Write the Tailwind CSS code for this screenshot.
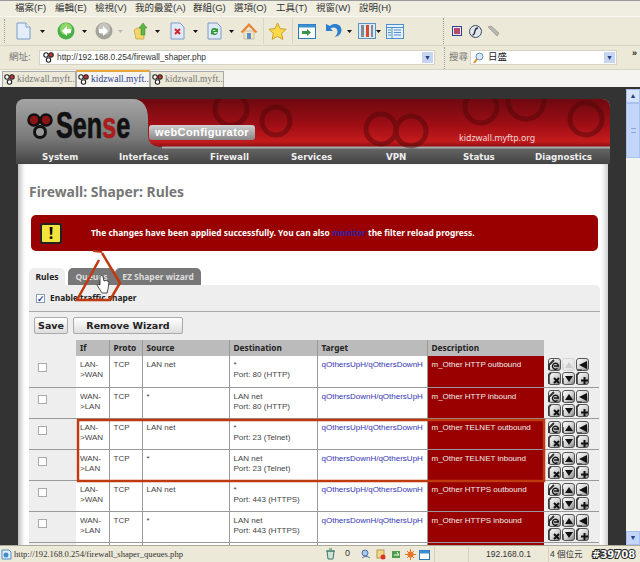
<!DOCTYPE html>
<html>
<head>
    <title>Firewall: Shaper: Rules</title>
    <script src="https://cdn.jsdelivr.net/npm/@tailwindcss/browser@4"></script>
</head>
<body class="w-[640px] h-[562px] overflow-hidden relative flex flex-col bg-[#ece9d8] font-['Liberation_Sans','Noto_Sans_CJK_TC',sans-serif]">

    <svg class="absolute" width="0" height="0">
        <defs>
            <linearGradient id="btnFill" x1="0" y1="0" x2="1" y2="1"><stop offset="0" stop-color="#fff"/><stop offset=".55" stop-color="#d4d4d4"/><stop offset="1" stop-color="#777"/></linearGradient>
            <linearGradient id="redFill" x1="0" y1="0" x2="0" y2="1"><stop offset="0" stop-color="#6e0a10"/><stop offset=".55" stop-color="#a00f16"/><stop offset=".88" stop-color="#c41c1e"/><stop offset="1" stop-color="#8e0f12"/></linearGradient>
        </defs>
    </svg>

    <!-- menu bar -->
    <div class="h-[16px] shrink-0 flex items-center pl-[15px] gap-[9px] text-[9.5px] text-[#333] bg-[#f0eee0] border-t border-[#999]">
        <span class="w-[31px] whitespace-nowrap">檔案(F)</span>
        <span class="w-[31px] whitespace-nowrap">編輯(E)</span>
        <span class="w-[31px] whitespace-nowrap">檢視(V)</span>
        <span class="w-[49px] whitespace-nowrap">我的最愛(A)</span>
        <span class="w-[32px] whitespace-nowrap">群組(G)</span>
        <span class="w-[33px] whitespace-nowrap">選項(O)</span>
        <span class="w-[31px] whitespace-nowrap">工具(T)</span>
        <span class="w-[34px] whitespace-nowrap">視窗(W)</span>
        <span class="w-[31px] whitespace-nowrap">說明(H)</span>
    </div>

    <!-- toolbar -->
    <div class="h-[30px] shrink-0 flex items-center bg-[#ece9d8] border-t border-[#f8f7f0] border-b border-b-[#d8d5c2] relative">
        <div class="ml-[4px] w-px h-[24px] border-l border-dotted border-[#999]"></div>
        <svg class="ml-[11px]" width="15" height="18" viewBox="0 0 15 18"><path d="M1 1h9l4 4v12H1z" fill="#e4eefa" stroke="#7b9cc8"/><path d="M10 1v4h4" fill="#fff" stroke="#7b9cc8"/></svg>
        <svg class="ml-[9px]" width="5" height="3" viewBox="0 0 5 3"><path d="M0 0h5L2.500 3z" fill="#111"/></svg>
        <svg class="ml-[12px]" width="18" height="18" viewBox="0 0 18 18"><circle cx="9" cy="9" r="8.500" fill="#4cb04a"/><circle cx="9" cy="7" r="6" fill="#8fd66d"/><path d="M10 4 5 9l5 5V11h4V7h-4z" fill="#fff"/></svg>
        <svg class="ml-[7px]" width="5" height="3" viewBox="0 0 5 3"><path d="M0 0h5L2.500 3z" fill="#111"/></svg>
        <svg class="ml-[8px]" width="18" height="18" viewBox="0 0 18 18"><circle cx="9" cy="9" r="8.500" fill="#a3a39c"/><circle cx="9" cy="7" r="6" fill="#c6c6bf"/><path d="M8 4l5 5-5 5V11H4V7h4z" fill="#fff"/></svg>
        <svg class="ml-[5px]" width="5" height="3" viewBox="0 0 5 3"><path d="M0 0h5L2.500 3z" fill="#bbb"/></svg>
        <svg class="ml-[10px]" width="16" height="18" viewBox="0 0 16 18"><path d="M1 8l3-2h5l2 2v9H3z" fill="#f4d46e" stroke="#c59d3a" stroke-width=".7"/><path d="M10 1l4 5h-2v7H8V6H6z" fill="#5db544" stroke="#3a8a2e" stroke-width=".5"/></svg>
        <svg class="ml-[6px]" width="5" height="3" viewBox="0 0 5 3"><path d="M0 0h5L2.500 3z" fill="#111"/></svg>
        <svg class="ml-[10px]" width="15" height="18" viewBox="0 0 15 18"><path d="M1 1h9l4 4v12H1z" fill="#dfe9f8" stroke="#7b9cc8"/><path d="M5 7l5 5M10 7l-5 5" stroke="#d8232a" stroke-width="2"/></svg>
        <svg class="ml-[8px]" width="5" height="3" viewBox="0 0 5 3"><path d="M0 0h5L2.500 3z" fill="#111"/></svg>
        <svg class="ml-[9px]" width="15" height="18" viewBox="0 0 15 18"><path d="M1 1h9l4 4v12H1z" fill="#dfe9f8" stroke="#7b9cc8"/><path d="M4 9a3.500 3.500 0 0 1 6-2l1-1v4H7l1.500-1.500A2 2 0 0 0 5.500 9zM11 10a3.500 3.500 0 0 1-6 2l-1 1V9h4l-1.500 1.500a2 2 0 0 0 3 .5z" fill="#2e9a36"/></svg>
        <svg class="ml-[7px]" width="5" height="3" viewBox="0 0 5 3"><path d="M0 0h5L2.500 3z" fill="#111"/></svg>
        <svg class="ml-[6px]" width="18" height="18" viewBox="0 0 18 18"><path d="M4 9v8h10V9z" fill="#f3e7c8" stroke="#b9a37a" stroke-width=".6"/><path d="M7 11h4v6H7z" fill="#5a8fc8"/><path d="M9 1 .5 10l2 1L9 4.500l6.500 6.500 2-1z" fill="#e8873a"/></svg>
        <div class="ml-[5px] w-px h-[26px] bg-[#d8d5c2]"></div>
        <svg class="ml-[4px]" width="19" height="18" viewBox="0 0 19 18"><path d="M9.500 1l2.600 5.600 6 .7-4.500 4.100 1.200 6-5.300-3-5.300 3 1.200-6L.9 7.300l6-.7z" fill="#fbd94a" stroke="#c9a02a"/></svg>
        <div class="ml-[5px] w-px h-[26px] bg-[#d8d5c2]"></div>
        <svg class="ml-[5px]" width="18" height="15" viewBox="0 0 18 15"><rect x=".5" y=".5" width="17" height="14" fill="#fff" stroke="#2b77b8"/><rect x=".5" y=".5" width="17" height="3" fill="#3b8ecf"/><path d="M4 10V7h5V5l4 3.500L9 12v-2z" fill="#37964a"/></svg>
        <svg class="ml-[9px]" width="17" height="16" viewBox="0 0 17 16"><path d="M1 1v7h7L5.500 5.500c3-2 7-.5 7 3 0 2-1 4-3 5.500 5-1 7-4 7-7 0-5.500-7-8-11.500-4z" fill="#2a7fd0"/></svg>
        <svg class="ml-[5px]" width="5" height="3" viewBox="0 0 5 3"><path d="M0 0h5L2.500 3z" fill="#111"/></svg>
        <svg class="ml-[6px]" width="18" height="16" viewBox="0 0 18 16"><rect x=".5" y=".5" width="17" height="15" fill="#dceaf6" stroke="#5c93c4"/><rect x="3" y="2" width="3" height="12" fill="#7f8b95"/><rect x="8" y="2" width="3" height="12" fill="#d94a2a"/><rect x="13" y="2" width="2" height="12" fill="#7f8b95"/></svg>
        <svg class="ml-[0px]" width="5" height="3" viewBox="0 0 5 3"><path d="M0 0h5L2.500 3z" fill="#111"/></svg>
        <svg class="ml-[5px]" width="18" height="15" viewBox="0 0 18 15"><rect x=".5" y=".5" width="17" height="14" fill="#e6f0fa" stroke="#4e8fc9"/><path d="M1 3.500h16M6 3.500V14M8 6h7M8 8.500h7M8 11h7M2 6h3M2 8.500h3M2 11h3" stroke="#4e8fc9"/></svg>
        <div class="ml-[39px] w-px h-[26px] border-l border-dotted border-[#999]"></div>
        <svg class="ml-[8px]" width="10" height="10" viewBox="0 0 10 10"><rect x=".5" y=".5" width="9" height="9" fill="#e8e8f8" stroke="#33408a"/><rect x="2" y="2" width="6" height="6" fill="#b84a6a"/></svg>
        <svg class="ml-[7px]" width="13" height="13" viewBox="0 0 13 13"><circle cx="6.500" cy="6.500" r="6" fill="#dfe6ee" stroke="#3a4a60"/><path d="M9 3C6 3 6 6 5.500 8S4 10 3.500 10" stroke="#223" stroke-width="1.300" fill="none"/></svg>
        <svg class="ml-[5px]" width="13" height="12" viewBox="0 0 13 12"><path d="M1 2l3-1 8 7-2 3z" fill="#b8b8b0" stroke="#8a8a82" stroke-width=".6"/></svg>
    </div>

    <!-- address bar -->
    <div class="h-[24px] shrink-0 flex items-center bg-[#ece9d8] border-b border-[#d8d5c2]">
        <span class="ml-[9px] w-[30px] text-[9.5px] text-[#777] whitespace-nowrap">網址:</span>
        <div class="w-[396px] h-[15px] bg-white flex items-center border border-[#d6d3c4] relative">
            <svg class="ml-[3px]" width="11" height="11" viewBox="0 0 11 11"><circle cx="3" cy="3" r="2.200" fill="#fff" stroke="#222" stroke-width="1.100"/><circle cx="8" cy="3" r="2.200" fill="#c33" stroke="#222" stroke-width="1.100"/><circle cx="5.500" cy="8" r="2.200" fill="#fff" stroke="#222" stroke-width="1.100"/></svg>
            <span class="ml-[3px] text-[8.4px] text-[#333] whitespace-nowrap">http://192.168.0.254/firewall_shaper.php</span>
            <span class="absolute right-[1px] top-[1px] w-[11px] h-[11px] bg-[#c6d5f2] text-[#24407a] text-[7px] leading-[11px] text-center">▼</span>
        </div>
        <div class="ml-[9px] w-px h-[22px] border-l border-dotted border-[#999]"></div>
        <span class="ml-[4px] w-[21px] text-[9.5px] text-[#777] whitespace-nowrap">搜尋</span>
        <div class="w-[147px] h-[15px] bg-white flex items-center border border-[#d6d3c4] relative">
            <svg class="ml-[2px]" width="11" height="12" viewBox="0 0 11 12"><circle cx="6.500" cy="4.500" r="3.500" fill="#dceaf8" stroke="#5c8cc0"/><path d="M4 7 1 11" stroke="#d98a2a" stroke-width="2"/></svg>
            <span class="ml-[4px] text-[9.5px] text-[#222] whitespace-nowrap">日盛</span>
            <span class="absolute right-[1px] top-[1px] w-[11px] h-[11px] bg-[#c6d5f2] text-[#24407a] text-[7px] leading-[11px] text-center">▼</span>
        </div>
        <span class="ml-[15px] text-[9px] leading-none text-[#222] font-bold -mt-[8px]">»</span>
    </div>

    <!-- tab strip -->
    <div class="h-[19px] shrink-0 flex items-end pl-[2px] bg-[#f5f4f0] border-b-2 border-[#333]">
        <div class="w-[74px] h-[16px] flex items-center gap-[2px] pl-[1px] bg-[#ece9d8] border border-b-0 border-[#aaa] text-[9.5px] text-[#777] font-['Liberation_Serif',serif] whitespace-nowrap overflow-hidden">
            <svg width="11" height="11" viewBox="0 0 11 11" class="shrink-0"><circle cx="3" cy="3" r="2.200" fill="#fff" stroke="#222" stroke-width="1.100"/><circle cx="8" cy="3" r="2.200" fill="#c33" stroke="#222" stroke-width="1.100"/><circle cx="5.500" cy="8" r="2.200" fill="#fff" stroke="#222" stroke-width="1.100"/></svg>kidzwall.myft...
        </div>
        <div class="w-[74px] h-[17px] flex items-center gap-[2px] pl-[1px] bg-[#f5f4f0] border-x border-[#aaa] border-t-2 border-t-[#e8a53a] text-[9.5px] text-[#2a3f8f] font-['Liberation_Serif',serif] whitespace-nowrap overflow-hidden">
            <svg width="11" height="11" viewBox="0 0 11 11" class="shrink-0"><circle cx="3" cy="3" r="2.200" fill="#fff" stroke="#222" stroke-width="1.100"/><circle cx="8" cy="3" r="2.200" fill="#c33" stroke="#222" stroke-width="1.100"/><circle cx="5.500" cy="8" r="2.200" fill="#fff" stroke="#222" stroke-width="1.100"/></svg>kidzwall.myft...
        </div>
        <div class="w-[74px] h-[16px] flex items-center gap-[2px] pl-[1px] bg-[#ece9d8] border border-b-0 border-[#aaa] text-[9.5px] text-[#777] font-['Liberation_Serif',serif] whitespace-nowrap overflow-hidden">
            <svg width="11" height="11" viewBox="0 0 11 11" class="shrink-0"><circle cx="3" cy="3" r="2.200" fill="#fff" stroke="#222" stroke-width="1.100"/><circle cx="8" cy="3" r="2.200" fill="#c33" stroke="#222" stroke-width="1.100"/><circle cx="5.500" cy="8" r="2.200" fill="#fff" stroke="#222" stroke-width="1.100"/></svg>kidzwall.myft...
        </div>
    </div>

    <!-- browser viewport -->
    <div class="flex-1 min-h-0 flex overflow-hidden">
        <div class="w-[626px] bg-[#333] pt-[10px] overflow-hidden font-['Noto_Sans',sans-serif]">
            <!-- pfSense header -->
            <div class="ml-[16px] w-[594px] h-[65px] rounded-t-[8px] overflow-hidden relative bg-[linear-gradient(#a5a5a5,#7a7a7a_60%,#444)]">
                <svg class="absolute left-0 top-0" width="594" height="50" viewBox="0 0 594 50">
                    <path d="M117 0C127 0 132 8 132 20V36Q132 48 146 48H594V0Z" fill="url(#redFill)"/>
                    <path d="M146 48.500H594" stroke="#aaa" stroke-width="2"/>
                    <g fill="none" stroke="#4a0508" stroke-width="5" opacity=".45">
                        <circle cx="215" cy="10" r="16"/><circle cx="260" cy="22" r="14"/><circle cx="365" cy="30" r="15"/><circle cx="395" cy="32" r="15"/><circle cx="465" cy="8" r="16"/><circle cx="510" cy="2" r="18"/><circle cx="570" cy="20" r="16"/>
                    </g>
                </svg>
                <svg class="absolute left-[10px] top-[13px]" width="28" height="27" viewBox="0 0 28 27"><circle cx="8" cy="8" r="5.500" fill="#8e1114" stroke="#111" stroke-width="2.500"/><circle cx="20" cy="8" r="5.500" fill="#8e1114" stroke="#111" stroke-width="2.500"/><circle cx="14" cy="20" r="5.500" fill="#999" stroke="#111" stroke-width="3"/></svg>
                <span class="absolute left-[40px] top-[7px] text-[36px] leading-[40px] font-bold text-[#111] font-['Liberation_Sans',sans-serif] scale-x-[0.7] origin-left [-webkit-text-stroke:0.7px_#111]">Sen<span class="text-[#a81c1c] [-webkit-text-stroke:0.7px_#a81c1c]">s</span>e</span>
                <span class="absolute left-[133px] top-[26px] w-[106px] h-[15px] rounded-[3px] bg-[linear-gradient(#cfcfcf,#888)] text-white text-[11px] leading-[15px] text-center font-bold tracking-[0.4px] font-['Liberation_Sans',sans-serif] whitespace-nowrap">webConfigurator</span>
                <span class="absolute left-[443px] top-[32px] text-[8.8px] leading-[14px] text-[#f0d8d8] whitespace-nowrap">kidzwall.myftp.org</span>
                <div class="absolute left-0 right-0 bottom-0 h-[14px] text-[8.7px] leading-[14px] font-bold text-[#eee] font-['DejaVu_Sans',sans-serif]">
                    <span class="absolute left-[26px]">System</span>
                    <span class="absolute left-[103px]">Interfaces</span>
                    <span class="absolute left-[194px]">Firewall</span>
                    <span class="absolute left-[275px]">Services</span>
                    <span class="absolute left-[370px]">VPN</span>
                    <span class="absolute left-[447px]">Status</span>
                    <span class="absolute left-[519px]">Diagnostics</span>
                </div>
            </div>

            <!-- page body -->
            <div class="ml-[18px] w-[590px] h-[400px] bg-white overflow-hidden pl-[11px] pr-[8px] pt-[20px] shadow-[inset_6px_0_5px_-3px_#bbb,inset_-6px_0_5px_-3px_#ccc]">
                <h1 class="text-[13.9px] leading-[16px] font-bold text-[#777]">Firewall: Shaper: Rules</h1>

                <div class="mt-[15px] ml-[2px] w-[567px] h-[36px] rounded-[5px] bg-[#990000] flex items-center pl-[9px]">
                    <span class="w-[22px] h-[21px] rounded-[3px] bg-[#f4e23c] border-2 border-[#222] text-black text-[16px] leading-[17px] font-bold text-center">!</span>
                    <span class="ml-[29px] text-[8.4px] font-bold text-white whitespace-nowrap">The changes have been applied successfully. You can also <span class="text-[#3322aa]">monitor</span> the filter reload progress.</span>
                </div>

                <!-- tabs -->
                <div class="mt-[17px] h-[17px] flex items-end text-[8.5px] font-bold">
                    <span class="w-[36px] mr-[3px] h-[17px] leading-[17px] text-center bg-[#eee] rounded-t-[5px] text-[#222]">Rules</span>
                    <span class="w-[47px] h-[17px] leading-[17px] text-center bg-[#777] rounded-t-[5px] text-[#ddd]">Queues</span>
                    <span class="w-[86px] h-[17px] leading-[17px] text-center bg-[#777] rounded-t-[5px] text-[#ddd] whitespace-nowrap">EZ Shaper wizard</span>
                </div>

                <!-- panel -->
                <div class="w-[571px] bg-[#eee] rounded-tr-[5px] h-[300px]">
                    <label class="h-[27px] flex items-center gap-[5px] pl-[7px] text-[8.4px] font-bold text-[#222] border-b border-[#aaa]">
                        <span class="w-[9px] h-[9px] bg-white border border-[#8a9bb8] text-[#2a3fa0] text-[9px] leading-[8px] font-bold">✓</span>
                        Enable traffic shaper
                    </label>
                    <div class="pl-[5px] pt-[5px] flex gap-[5px] font-['DejaVu_Sans',sans-serif]">
                        <span class="w-[34px] h-[17px] rounded-[2px] border border-[#aaa] bg-[linear-gradient(#fff,#ddd)] text-[9.5px] leading-[15px] font-bold text-center text-[#222]">Save</span>
                        <span class="w-[110px] h-[17px] rounded-[2px] border border-[#aaa] bg-[linear-gradient(#fff,#ddd)] text-[9.5px] leading-[15px] font-bold text-center text-[#222]">Remove Wizard</span>
                    </div>
                    <table class="mt-[6px] border-collapse table-fixed w-[570px] text-[8px] leading-[10px] font-['Liberation_Sans',sans-serif]">
                        <colgroup>
                            <col class="w-[47px]"><col class="w-[33px]"><col class="w-[33px]"><col class="w-[87px]"><col class="w-[88px]"><col class="w-[110px]"><col class="w-[117px]"><col class="w-[55px]">
                        </colgroup>
                        <thead>
                            <tr class="h-[16px] text-left font-bold text-[#222] text-[8.3px] font-['Noto_Sans',sans-serif]">
                                <th></th>
                                <th class="pl-[4px] bg-[#bbb] border-r border-[#999]">If</th>
                                <th class="pl-[4px] bg-[#bbb] border-r border-[#999]">Proto</th>
                                <th class="pl-[4px] bg-[#bbb] border-r border-[#999]">Source</th>
                                <th class="pl-[4px] bg-[#bbb] border-r border-[#999]">Destination</th>
                                <th class="pl-[4px] bg-[#bbb] border-r border-[#999]">Target</th>
                                <th class="pl-[4px] bg-[#bbb]">Description</th>
                                <th></th>
                            </tr>
                        </thead>
                        <tbody id="rows"></tbody>
                        <tfoot>
                            <tr class="h-[10px]">
                                <td></td>
                                <td class="bg-white border-r border-[#999]"></td>
                                <td class="bg-white border-r border-[#999]"></td>
                                <td class="bg-white border-r border-[#999]"></td>
                                <td class="bg-white border-r border-[#999]"></td>
                                <td class="bg-white border-r border-[#999]"></td>
                                <td class="bg-[#990000]"></td>
                                <td></td>
                            </tr>
                        </tfoot>
                    </table>
                </div>
            </div>
        </div>

        <!-- scrollbar -->
        <div class="w-[14px] bg-[#f4f4ee] relative">
            <div class="h-[14px] bg-[#d6e4fb] border border-[#a9c1ec] text-[#24407a] text-[7px] leading-[12px] text-center">▲</div>
            <div class="h-[55px] bg-[#c3d5fa] border border-[#a9c1ec] flex items-center justify-center"><span class="w-[5px] h-[5px] border-y border-[#8aa6dc]"></span></div>
            <div class="absolute left-0 right-0 bottom-0 h-[14px] bg-[#c3d5fa] border border-[#a9c1ec] text-[#24407a] text-[7px] leading-[12px] text-center">▼</div>
        </div>
    </div>

    <!-- status bar -->
    <div class="h-[17px] shrink-0 flex items-center bg-[#ece9d8] border-t border-[#aca899] text-[#333] relative">
        <svg class="ml-[1px]" width="11" height="11" viewBox="0 0 11 11"><path d="M1 1h7l2 2v7H1z" fill="#e4eefa" stroke="#4e8fc9"/><circle cx="5" cy="6" r="2.500" fill="#3b8ecf"/></svg>
        <span class="ml-[2px] text-[8.6px] font-['Liberation_Serif',serif] whitespace-nowrap w-[300px]">http://192.168.0.254/firewall_shaper_queues.php</span>
        <svg class="ml-[11px]" width="11" height="12" viewBox="0 0 11 12"><path d="M2 3h7l-1 8H3z" fill="#cfe3d6" stroke="#3a7a6a"/><path d="M1 3h9M4 1h3" stroke="#3a7a6a"/></svg>
        <span class="ml-[9px] w-[10px] text-[9px]">0</span>
        <svg class="ml-[6px]" width="10" height="11" viewBox="0 0 10 11"><circle cx="4" cy="4" r="3" fill="#a9c8ee" stroke="#4e6fa8"/><path d="M1 9c2-2 6-2 8 0" stroke="#4e6fa8" fill="none"/></svg>
        <svg class="ml-[5px]" width="10" height="11" viewBox="0 0 10 11"><rect x="1" y="1" width="7" height="8" fill="#f3d98a" stroke="#b39a4a"/><circle cx="7" cy="8" r="2.500" fill="#d8322a"/></svg>
        <svg class="ml-[5px]" width="10" height="11" viewBox="0 0 10 11"><rect x="1" y="2" width="8" height="7" fill="#4aa04a"/><path d="M3 6h5L6 3" stroke="#fff" fill="none"/></svg>
        <svg class="ml-[4px]" width="11" height="11" viewBox="0 0 11 11"><circle cx="5.500" cy="5.500" r="3" fill="#e8732a"/><path d="M5.500 0v11M0 5.500h11M2 2l7 7M9 2l-7 7" stroke="#e8732a"/></svg>
        <svg class="ml-[3px]" width="11" height="11" viewBox="0 0 11 11"><rect x=".5" y="1.500" width="10" height="9" fill="#fff" stroke="#2b77b8"/><rect x=".5" y="1.500" width="10" height="3" fill="#3b8ecf"/></svg>
        <div class="ml-[4px] w-px h-[15px] bg-[#d4d0bd]"></div>
        <div class="ml-[33px] w-px h-[15px] bg-[#d4d0bd]"></div>
        <span class="ml-[17px] w-[44px] text-[8.5px] whitespace-nowrap">192.168.0.1</span>
        <div class="ml-[18px] w-px h-[15px] bg-[#d4d0bd]"></div>
        <span class="ml-[1px] text-[8.5px] w-[38px] whitespace-nowrap overflow-hidden">4 個位元</span>
    </div>

    <!-- annotations drawn on top of the page -->
    <svg class="absolute left-0 top-0 pointer-events-none" width="640" height="562" viewBox="0 0 640 562" fill="none">
        <path d="M78 420H544V481H78z" stroke="#c03a10" stroke-width="2.500"/>
        <path d="M99 260 77 300H110L120 283 102 253" stroke="#c03a10" stroke-width="2.500"/>
        <path d="M93 251l9 1" stroke="#c03a10" stroke-width="2"/>
        <path d="M100 276c2-1 3-1 3 1l1 4c2-1 4 0 5 1l-1 7-1 4h-5l-5-8c0-1 2-1 3 0z" fill="#fff" stroke="#222" stroke-width=".8"/>
    </svg>
    <span class="absolute left-[592px] top-[548px] text-[10px] leading-[13px] font-bold text-white font-['DejaVu_Sans',sans-serif] [-webkit-text-stroke:2px_#222] [paint-order:stroke]">#39708</span>

    <script>
        const rows = [
            ['LAN-<br>>WAN', 'LAN net', '*', '80 (HTTP)', 'qOthersUpH/qOthersDownH', 'm_Other HTTP outbound'],
            ['WAN-<br>>LAN', '*', 'LAN net', '80 (HTTP)', 'qOthersDownH/qOthersUpH', 'm_Other HTTP inbound'],
            ['LAN-<br>>WAN', 'LAN net', '*', '23 (Telnet)', 'qOthersUpH/qOthersDownH', 'm_Other TELNET outbound'],
            ['WAN-<br>>LAN', '*', 'LAN net', '23 (Telnet)', 'qOthersDownH/qOthersUpH', 'm_Other TELNET inbound'],
            ['LAN-<br>>WAN', 'LAN net', '*', '443 (HTTPS)', 'qOthersUpH/qOthersDownH', 'm_Other HTTPS outbound'],
            ['WAN-<br>>LAN', '*', 'LAN net', '443 (HTTPS)', 'qOthersDownH/qOthersUpH', 'm_Other HTTPS inbound'],
        ];

        // the six little rule buttons: e, up, left, x, down, +
        const glyphs = [
            '<path d="M1 12 1 7 6 2" stroke="#333" stroke-width="2" fill="none"/><path d="M6 8h5M10.500 8a3 3 0 1 0-1 2.500" stroke="#111" stroke-width="1.400" fill="none"/>',
            '<path d="M7 4l4 6H3z" fill="#111"/><path d="M1 12V6" stroke="#444" stroke-width="1.500"/>',
            '<path d="M3 7l8-4v8z" fill="#111"/><path d="M1 12h5" stroke="#444" stroke-width="1.500"/>',
            '<path d="M6 6l5 5M11 6l-5 5" stroke="#111" stroke-width="2"/><path d="M1 12V3L3 1" stroke="#333" stroke-width="1.500" fill="none"/>',
            '<path d="M7 10 3 4h8z" fill="#111"/><path d="M1 12V6" stroke="#444" stroke-width="1.500"/>',
            '<path d="M8.500 5v7M5 8.500h7" stroke="#111" stroke-width="2"/><path d="M1 12V3L3 1" stroke="#333" stroke-width="1.500" fill="none"/>',
        ];
        const btn = (g, faded) => `<svg width="13" height="13" viewBox="0 0 13 13" opacity="${faded ? 0.15 : 1}"><rect x=".5" y=".5" width="12" height="12" rx="2.500" fill="url(#btnFill)" stroke="#555"/>${g}</svg>`;

        document.getElementById('rows').innerHTML = rows.map((r, n) => `
            <tr class="h-[31px] align-top text-[#444] border-b border-[#999]">
                <td class="pl-[9px] pt-[7px]"><span class="block w-[9px] h-[9px] bg-white border border-[#aaa]"></span></td>
                <td class="pl-[4px] pt-[4px] bg-white border-r border-[#999]">${r[0]}</td>
                <td class="pl-[4px] pt-[4px] bg-white border-r border-[#999]">TCP</td>
                <td class="pl-[4px] pt-[4px] bg-white border-r border-[#999]">${r[1]}</td>
                <td class="pl-[4px] pt-[4px] bg-white border-r border-[#999]">${r[2]}<br>Port: ${r[3]}</td>
                <td class="pl-[4px] pt-[4px] bg-white border-r border-[#999] text-[#3535b5] whitespace-nowrap overflow-hidden">${r[4]}</td>
                <td class="pl-[4px] pt-[4px] bg-[#990000] text-[#eee] whitespace-nowrap overflow-hidden">${r[5]}</td>
                <td class="pl-[4px] pt-[2px]"><div class="grid grid-cols-[repeat(3,13px)] gap-x-[1px] gap-y-[1px]">${glyphs.map((g, j) => btn(g, n === 0 && j === 1)).join('')}</div></td>
            </tr>`).join('');
    </script>
</body>
</html>
